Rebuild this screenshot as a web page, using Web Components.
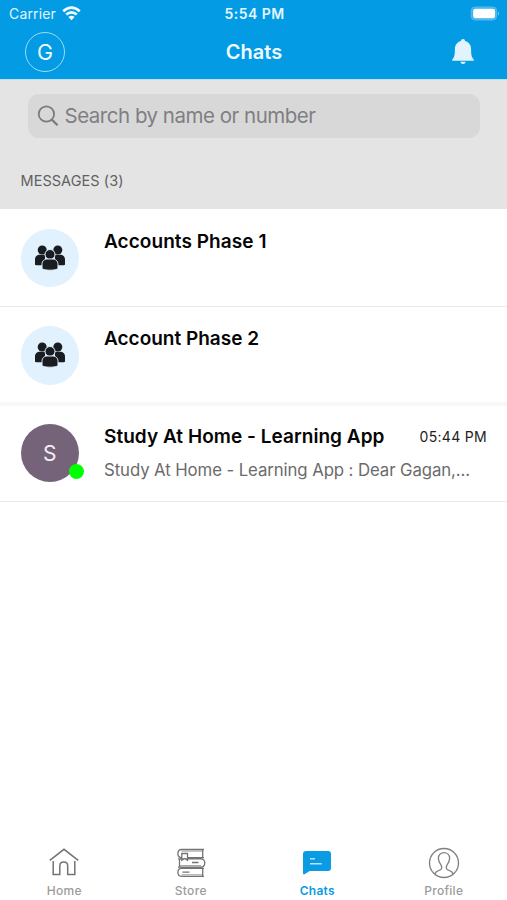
<!DOCTYPE html>
<html lang="en">
<head>
<meta charset="utf-8">
<title>Chats</title>
<style>
body{margin:0;background:#fff;font-family:Inter,"Liberation Sans",sans-serif}
</style>
</head>
<body>
<chat-app></chat-app>
<script>
const define = (name, html, setup) => {
  const t = document.createElement('template');
  t.innerHTML = html;
  customElements.define(name, class extends HTMLElement {
    connectedCallback() {
      if (this.shadowRoot) return;
      this.attachShadow({mode: 'open'}).append(t.content.cloneNode(true));
      if (setup) setup(this, this.shadowRoot);
    }
  });
};

// A one-line label whose tracking is adjusted so that it spans the width in its w attribute.
define('fit-text', `<style>:host{display:block;white-space:pre;flex:none}span{display:inline-block;white-space:pre}</style><span></span>`,
  (el, root) => {
    const s = root.querySelector('span');
    s.textContent = el.getAttribute('text');
    const w = +el.getAttribute('w');
    const n = s.textContent.length;
    const d = (w - s.getBoundingClientRect().width) / n;
    s.style.letterSpacing = d.toFixed(3) + 'px';
    el.style.width = w + 'px';
  });

define('status-bar', `<style>
:host{display:grid;grid-template-columns:1fr auto 1fr;align-items:center;height:27px;padding:0 7px 0 9px;color:#e2f7ff;font-size:14px;line-height:27px}
.l{display:flex;align-items:center;gap:5.500px}.time{font-weight:600}.r{display:flex;justify-content:flex-end}
svg{display:block}
</style>
<div class="l"><fit-text text="Carrier" w="47"></fit-text>
<svg width="19" height="15" viewBox="0 0 19 15" fill="none" stroke="#f2fcff" stroke-width="2.6"><path d="M1.2 5.3Q9.5-2 17.8 5.3M4.2 8.6Q9.5 4 14.8 8.6"/><path d="M9.5 14.2L6.4 11Q9.5 8.5 12.6 11Z" fill="#f2fcff" stroke="none"/></svg></div>
<fit-text class="time" text="5:54 PM" w="60"></fit-text>
<div class="r"><svg width="30" height="15" viewBox="0 0 30 15"><rect x="1.200" y="1" width="25.500" height="13" rx="4" fill="#3eb1ec" stroke="#58bdf0"/><rect x="3.100" y="2.800" width="22" height="9.400" rx="2.300" fill="#fff"/><path d="M28 5.200q2 2.300 0 4.600z" fill="#79cef5"/></svg></div>`);

define('nav-header', `<style>
:host{display:grid;grid-template-columns:1fr auto 1fr;align-items:center;height:50px;padding:0 31px 0 25px;box-sizing:border-box;color:#eefaff}
.g{box-sizing:border-box;width:40px;height:40px;border:1.4px solid #9bdcf8;border-radius:50%;display:grid;place-items:center;font-size:21.5px;line-height:36px}
.t{font-size:20px;font-weight:600;line-height:30px;margin-left:7px}
svg{display:block;justify-self:end}
</style>
<div class="g">G</div><fit-text class="t" text="Chats" w="56.5"></fit-text>
<svg width="26" height="28" viewBox="0 0 26 28" fill="#e1f4fd"><path d="M13 1c1.2 0 2 .8 2.1 2 3.700 1 6 4 6 8.200 0 5.500.5 8.200 2.700 10.200v1.300H2.200v-1.300c2.200-2 2.700-4.700 2.700-10.200C4.900 7 7.200 4 10.900 3c.1-1.200.9-2 2.100-2z"/><path d="M10.400 23.700h5.200c-.3 1.600-1.200 2.200-2.600 2.200s-2.300-.6-2.600-2.200z"/></svg>`);

define('search-box', `<style>
:host{display:flex;align-items:center;height:44px;width:452px;box-sizing:border-box;border-radius:11px;background:#d8d8d9;color:#7f7f82;padding-left:8.500px;gap:6px;font-size:20.500px;line-height:44px}
svg{display:block}
</style>
<svg width="22" height="22" viewBox="0 0 22 22" fill="none" stroke="#7b7b7f" stroke-width="1.8"><circle cx="9.4" cy="9" r="7.700"/><path d="M14.800 14.600l5.800 5.700" stroke-width="2.200"/></svg>
<fit-text text="Search by name or number" w="251"></fit-text>`);

define('user-avatar', `<style>
:host{display:grid;place-items:center;position:relative;width:58.500px;height:58.500px;border-radius:50%;flex:none;background:#e1f1fd;color:#f3eef3;font-size:21px}
:host([letter]){background:#756379}
svg{display:block}
.dot{position:absolute;left:48px;top:40px;width:15px;height:15px;border-radius:50%;background:#0f0}
</style>`, (el, root) => {
  if (el.hasAttribute('letter')) {
    root.append(el.getAttribute('letter'), Object.assign(document.createElement('div'), {className: 'dot'}));
  } else {
    root.innerHTML += `<svg width="32" height="28" viewBox="0 0 32 28" fill="#191d22"><circle cx="8.200" cy="6" r="4.500"/><circle cx="23.800" cy="6" r="4.500"/><path d="M1 20.500v-4.800c0-3.500 2-5 5-5h5v10.500H3C1.800 21.200 1 21 1 20.500zM31 20.500v-4.800c0-3.500-2-5-5-5h-5v10.500h8c1.200 0 2-.2 2-.7z"/><g stroke="#e1f1fd" stroke-width="1"><circle cx="16" cy="10.500" r="5"/><path d="M8 24v-3.200c0-4 2.200-5.800 5.800-5.800h4.400c3.600 0 5.800 1.800 5.800 5.800V24c0 1.400-3.500 2.200-8 2.200S8 25.400 8 24z"/></g></svg>`;
  }
});

define('chat-row', `<style>
:host{display:flex;box-sizing:border-box;height:97.700px;padding:19.500px 20px 0 20.500px;border-bottom:1px solid #ebebeb;color:#050505}
.body{flex:1;margin-left:25px;min-width:0}
.top{display:flex;justify-content:space-between;align-items:center;height:25px}
.name{font-size:19px;font-weight:600;line-height:25px}.time{font-size:14px;line-height:25px;color:#222}
.preview{font-size:16.800px;line-height:24px;color:#6b6b6b;margin-top:9.500px}
</style><slot></slot><div class="body"><div class="top"></div></div>`, (el, root) => {
  const add = (parent, cls, key) => {
    if (!el.dataset[key]) return;
    const f = document.createElement('fit-text');
    const [text, w] = el.dataset[key].split('|');
    f.className = cls;
    f.setAttribute('text', text);
    f.setAttribute('w', w);
    parent.append(f);
  };
  add(root.querySelector('.top'), 'name', 'name');
  add(root.querySelector('.top'), 'time', 'time');
  add(root.querySelector('.body'), 'preview', 'preview');
});

define('tab-item', `<style>
:host{display:flex;flex-direction:column;align-items:center;color:#9b9b9b;font-size:12px;font-weight:500;line-height:16px;gap:4px}
:host([active]){color:#0b9be2;font-weight:600}
::slotted(svg){display:block}
</style><slot></slot><fit-text></fit-text>`, (el, root) => {
  const f = document.createElement('fit-text');
  f.setAttribute('text', el.getAttribute('label'));
  f.setAttribute('w', el.getAttribute('w'));
  root.querySelector('fit-text').replaceWith(f);
});

define('tab-bar', `<style>
:host{display:grid;grid-template-columns:repeat(4,126.500px);padding:0 0 1px 1px;}
</style>
<tab-item label="Home" w="35"><svg width="32" height="32" viewBox="0 0 32 32" fill="none" stroke="#747474" stroke-width="1.500"><path d="M1.800 13.300L16 2.300l14.200 11M5.200 14v13.400h6.600V19c0-5.200 7.900-5.200 7.900 0v8.400h7.100V14"/></svg></tab-item>
<tab-item label="Store" w="32"><svg width="32" height="32" viewBox="0 0 32 32" fill="none" stroke="#747474" stroke-width="1.300"><path d="M29 2.500H6.500C1.700 2.500 1.700 10.600 6.500 10.600M12.500 10.600H29M27.700 2.500v8.100M6.800 6.500v6.800l2.800-1.800 2.900 1.800V6.500zM3 11.900h22.500c5.700 0 5.700 8.200 0 8.200H3M4.500 11.900v8.200M17 15.500h6.500M29 21.300H6.500c-4.800 0-4.800 8 0 8H29M27.700 21.300v8M7.500 25.200h7"/><path d="M6.500 4.100H27.500M4 18.600h22M6.500 27.800H28" stroke-width=".7"/></svg></tab-item>
<tab-item active label="Chats" w="35"><svg width="32" height="32" viewBox="0 0 32 32"><path d="M5.300 4h21.900Q30 4 30 7v14q0 3-2.800 3H8.600L4 27.100q-2 1-2-1V7q0-3 3.300-3z" fill="#0b9be2"/><path d="M9 11.800h5M9 16.700h11.800" stroke="#b4e3fa" stroke-width="1.600"/></svg></tab-item>
<tab-item label="Profile" w="39"><svg width="32" height="32" viewBox="0 0 32 32" fill="none" stroke="#808080" stroke-width="1.300"><circle cx="16" cy="16" r="14.500"/><path d="M6.800 27c.6-2.500 3-3.200 5.800-4.400 1.700-.8 1.300-3.100.3-4.700-1.500-1.800-2.500-4.500-2.500-6.600 0-7.500 11.200-7.500 11.200 0 0 2.100-1 4.800-2.500 6.600-1 1.600-1.400 3.900.3 4.700 2.800 1.200 5.200 1.900 5.800 4.400"/></svg></tab-item>`);

define('chat-app', `<style>
:host{display:flex;flex-direction:column;width:507px;height:900px;overflow:hidden;background:#fff}
header{background:#039be3;height:79px;flex:none}
.tools{background:#e4e4e4;border-top:1px solid #b8e3f6;height:130px;box-sizing:border-box;padding:14px 0 0 28px;flex:none}
.section{color:#616161;font-size:14.500px;line-height:20px;margin:33px 0 0 -7.500px}
main{flex:1}
.thick{border-bottom:4px solid #f8f8f8;height:99.200px;margin-bottom:-1.500px}
</style>
<header><status-bar></status-bar><nav-header></nav-header></header>
<div class="tools"><search-box></search-box><fit-text class="section" text="MESSAGES (3)" w="103"></fit-text></div>
<main>
<chat-row data-name="Accounts Phase 1|162.5"><user-avatar></user-avatar></chat-row>
<chat-row class="thick" data-name="Account Phase 2|155"><user-avatar></user-avatar></chat-row>
<chat-row data-name="Study At Home - Learning App|280.5" data-time="05:44 PM|67.5" data-preview="Study At Home - Learning App : Dear Gagan,...|366"><user-avatar letter="S"></user-avatar></chat-row>
</main>
<tab-bar></tab-bar>`);
</script>
</body>
</html>
